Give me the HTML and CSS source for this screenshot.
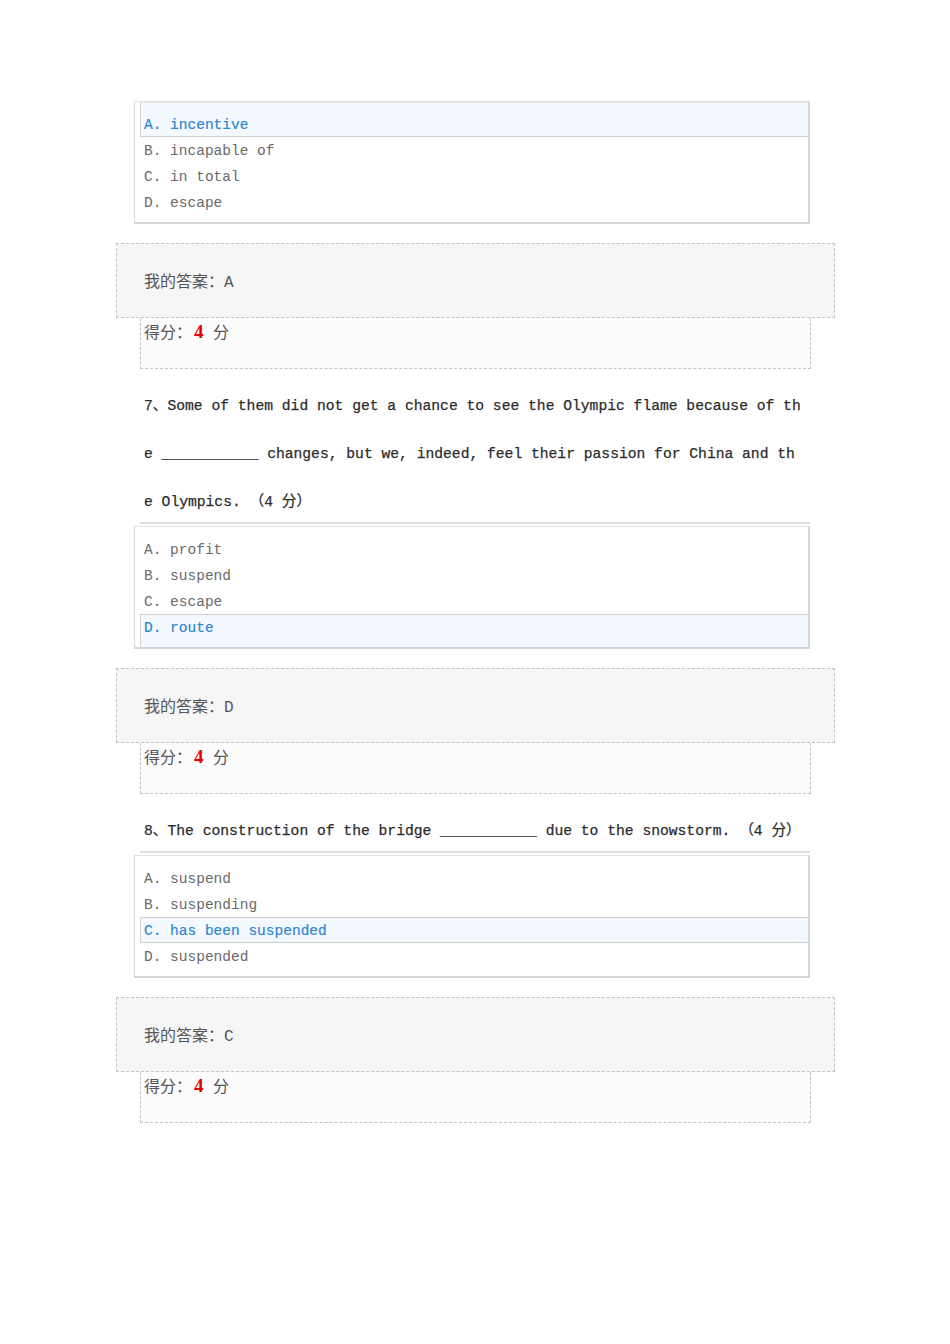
FILE: index.html
```html
<!DOCTYPE html>
<html lang="zh-CN">
<head>
<meta charset="utf-8">
<title>作业</title>
<link rel="stylesheet" href="styles.css">
</head>
<body>
<div class="page">

  <section class="item">
    <ul class="options">
      <li class="opt sel">A. incentive</li>
      <li class="opt">B. incapable of</li>
      <li class="opt">C. in total</li>
      <li class="opt">D. escape</li>
    </ul>
    <div class="answer">我的答案：A</div>
    <div class="score">得分：<span class="pts">4</span> 分</div>
  </section>

  <section class="item">
    <div class="question"><p class="qtext">7、Some of them did not get a chance to see the Olympic flame because of th<br>e ___________ changes, but we, indeed, feel their passion for China and th<br>e Olympics. （4 分）</p></div>
    <div class="sep"></div>
    <ul class="options">
      <li class="opt">A. profit</li>
      <li class="opt">B. suspend</li>
      <li class="opt">C. escape</li>
      <li class="opt sel">D. route</li>
    </ul>
    <div class="answer">我的答案：D</div>
    <div class="score">得分：<span class="pts">4</span> 分</div>
  </section>

  <section class="item">
    <div class="question"><p class="qtext">8、The construction of the bridge ___________ due to the snowstorm. （4 分）</p></div>
    <div class="sep"></div>
    <ul class="options">
      <li class="opt">A. suspend</li>
      <li class="opt">B. suspending</li>
      <li class="opt sel">C. has been suspended</li>
      <li class="opt">D. suspended</li>
    </ul>
    <div class="answer">我的答案：C</div>
    <div class="score">得分：<span class="pts">4</span> 分</div>
  </section>

</div>
</body>
</html>
```

FILE: styles.css
```css
* { box-sizing: border-box; }

html, body {
  margin: 0;
  padding: 0;
  background: #ffffff;
}

body {
  font-family: "Liberation Mono", "Noto Sans CJK SC", monospace;
  color: #333333;
}

.page {
  width: 719px;
  margin-left: 116px;
  padding-top: 101px;
}

.item {
  display: flex;
  flex-direction: column;
}

/* question text */
.question {
  padding: 13px 0 0 28px;
}

.qtext {
  margin: 0 0 -4px 0;
  font-size: 14.67px;
  line-height: 48px;
  white-space: nowrap;
  color: #2b2b2b;
  -webkit-text-stroke: 0.25px #2b2b2b;
}

.sep {
  width: 670px;
  margin-left: 24px;
  height: 2px;
  background: #dedede;
  margin-bottom: 2px;
}

/* options box */
.options {
  list-style: none;
  margin: 0 0 0 18px;
  padding: 0;
  width: 676px;
  border: 1px solid #e2e2e2;
  border-left-color: #d6d6d6;
  border-right: 2px solid #d4d4d4;
  border-bottom: 2px solid #d6d6d6;
}

.opt {
  margin-left: 5px;
  padding-left: 3px;
  height: 26px;
  line-height: 26px;
  border: 1px solid transparent;
  border-right: none;
  font-size: 14.5px;
  color: #6a6a6a;
  white-space: nowrap;
}

.opt:first-child {
  height: 35px;
  padding-top: 9px;
}

.opt:last-child {
  height: 33px;
  padding-bottom: 7px;
}

.opt.sel {
  background: #f4f9ff;
  border-color: #cfcfcf;
  color: #2e86d0;
  -webkit-text-stroke: 0.2px #2e86d0;
}

.opt.sel:first-child {
  border-top-color: #e6e6e6;
}

.opt.sel:last-child {
  border-bottom-color: transparent;
}

/* answer + score */
.answer {
  margin-top: 19px;
  height: 75px;
  padding: 28px 0 0 27px;
  background: #f6f6f6;
  border: 1px dashed #c4c4c4;
  font-size: 16px;
  line-height: 22px;
  color: #555555;
}

.score {
  margin-left: 24px;
  width: 671px;
  height: 51px;
  padding: 3px 0 0 3px;
  background: #fcfcfc;
  border: 1px dashed #c4c4c4;
  border-top: none;
  font-size: 16px;
  line-height: 22px;
  color: #555555;
}

.pts {
  color: #e60000;
  font-family: "Liberation Serif", serif;
  font-weight: bold;
  font-size: 19px;
  padding-left: 2px;
}
```
